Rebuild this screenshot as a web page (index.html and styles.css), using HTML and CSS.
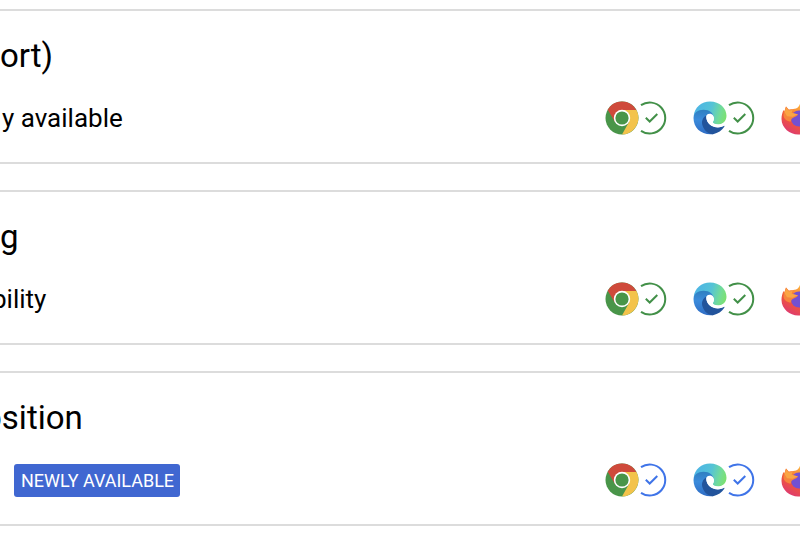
FILE: index.html
```
<!DOCTYPE html>
<html lang="en">
<head>
  <meta charset="UTF-8">
  <meta name="viewport" content="width=device-width, initial-scale=1.0">
  <title>Baseline status</title>
  <link rel="stylesheet" href="styles.css">
</head>
<body>

  <!-- Shared icons -->
  <svg class="sprite" aria-hidden="true">
    <defs>
      <linearGradient id="edge-light" x1="0" y1="0.4" x2="1" y2="0.6">
        <stop offset="0" stop-color="#4db4e6"/>
        <stop offset="0.5" stop-color="#55c3d6"/>
        <stop offset="0.8" stop-color="#72dc98"/>
        <stop offset="1" stop-color="#7ce070"/>
      </linearGradient>
      <linearGradient id="edge-mid" x1="0.5" y1="0" x2="0.5" y2="1">
        <stop offset="0" stop-color="#2f7fc0"/>
        <stop offset="0.4" stop-color="#3b8bdb"/>
        <stop offset="1" stop-color="#2f6cc4"/>
      </linearGradient>
      <linearGradient id="fox-body" x1="0.9" y1="0" x2="0.3" y2="1">
        <stop offset="0" stop-color="#ffd84a"/>
        <stop offset="0.4" stop-color="#fa9238"/>
        <stop offset="0.7" stop-color="#ee5340"/>
        <stop offset="1" stop-color="#dd3a72"/>
      </linearGradient>
    </defs>
    <symbol id="chrome" viewBox="0 0 34 34">
      <circle cx="17" cy="17" r="16.5" fill="#499549"/>
      <path d="M17 9H31.4A16.5 16.5 0 0 1 17 33.5L24 21Z" fill="#f3c34b"/>
      <path d="M2.7 8.8A16.5 16.5 0 0 1 31.4 9H17L10 21Z" fill="#cf4a3b"/>
      <circle cx="17" cy="17" r="8.2" fill="#fff"/>
      <circle cx="17" cy="17" r="6.6" fill="#499549"/>
    </symbol>
    <symbol id="edge" viewBox="0 0 34 34">
      <path d="M.7 15C1.600 6 8.500 .5 17 .5c9.700 0 16.500 6.700 16.500 14.300 0 5-3.600 8.700-8.300 8.700-4 0-6-1.700-5.200-2.900 1.600-2.400 1-5.600-2-7.600C12 8.500 3.500 10 .7 15Z" fill="url(#edge-light)"/>
      <path d="M.5 17C.8 11.500 5 8.800 10.500 8.800c6 0 10 3.500 10.300 7.500C19 13 16 12.600 14 14c-3.500 3-2 13 6 19.200C8.500 34.500.5 27 .5 17Z" fill="url(#edge-mid)"/>
      <path d="M13.500 14c-4 3-5.500 6.500-3.800 11C11.500 29.800 15 33 20 33.200c5-1 9-3.800 11.300-7.400.5-.8-.2-1.300-1-.9-3 1.500-6.700 1.900-9.800.6-5-2-8-6.500-7-11.500Z" fill="#22549c"/>
      <path d="M13.600 14.200c2-2 5-1.800 6.700.6 1 1.500.9 3.700-.2 5.600-.8 1.200 1 3.200 5.100 3.200 2.500 0 4.600-.8 6-2.100l-.3 3.600c-3.500 1.700-7.500 1.900-10.700.5-4.800-2.100-7.600-6.600-6.600-11.400Z" fill="#fff"/>
    </symbol>
    <symbol id="firefox" viewBox="0 0 34 34">
      <path d="M15 7.500C18 6 19 3.500 19.500 .5c4 2 6 4.500 7.500 7.500l2-1c3 4 4 8 3.500 12C32 28 25 33.500 17 33.500S.5 27 .5 18c0-3.500.8-6.500 2-9l.8 1.500L5 5.500l3 3.300Z" fill="url(#fox-body)"/>
      <circle cx="18" cy="17.500" r="8" fill="#7350d2"/>
      <path d="M2.500 14 5 5.500 7.600 9c1.500-.5 2.500-.5 4-.2L10.800 11.500c1.800 1.200 3.600 1.500 6.200 1.600-.2 2-2.600 2.600-5.300 3.900-1.500.8-1.900 2-1.700 3.500C6 20.500 2.500 18 2.500 14Z" fill="#f6853c"/>
      <path d="M3.500 11 5.200 6.500 7.600 9.500 11.600 9l-1 2.700 6 1.500-5 2.600-5.600-.6Z" fill="#faa544"/>
    </symbol>
    <symbol id="check" viewBox="0 0 28 34">
      <path d="M2 4.200A15.500 15.500 0 1 1 2 29.800" fill="none" stroke="currentColor" stroke-width="2"/>
      <path d="M6.800 16.800 10.700 20.500 18.300 13" fill="none" stroke="currentColor" stroke-width="2"/>
    </symbol>
  </svg>

  <main class="features">
    <section class="card">
      <h2 class="title">ort)</h2>
      <div class="status">
        <span class="label">y available</span>
        <div class="browsers">
          <span class="browser"><svg class="logo"><use href="#chrome"/></svg><svg class="check"><use href="#check"/></svg></span>
          <span class="browser"><svg class="logo"><use href="#edge"/></svg><svg class="check"><use href="#check"/></svg></span>
          <span class="browser"><svg class="logo"><use href="#firefox"/></svg><svg class="check"><use href="#check"/></svg></span>
        </div>
      </div>
    </section>

    <section class="card">
      <h2 class="title">g</h2>
      <div class="status">
        <span class="label label-cut">bility</span>
        <div class="browsers">
          <span class="browser"><svg class="logo"><use href="#chrome"/></svg><svg class="check"><use href="#check"/></svg></span>
          <span class="browser"><svg class="logo"><use href="#edge"/></svg><svg class="check"><use href="#check"/></svg></span>
          <span class="browser"><svg class="logo"><use href="#firefox"/></svg><svg class="check"><use href="#check"/></svg></span>
        </div>
      </div>
    </section>

    <section class="card newly">
      <h2 class="title title-cut">osition</h2>
      <div class="status">
        <span class="badge">NEWLY AVAILABLE</span>
        <div class="browsers">
          <span class="browser"><svg class="logo"><use href="#chrome"/></svg><svg class="check"><use href="#check"/></svg></span>
          <span class="browser"><svg class="logo"><use href="#edge"/></svg><svg class="check"><use href="#check"/></svg></span>
          <span class="browser"><svg class="logo"><use href="#firefox"/></svg><svg class="check"><use href="#check"/></svg></span>
        </div>
      </div>
    </section>
  </main>

</body>
</html>
```

FILE: styles.css
```
body {
  background-color: #fff;
  font-family: Roboto, Arial, sans-serif;
  margin: 0;
  color: #000;
  overflow: hidden;
}

.sprite {
  position: absolute;
  width: 0;
  height: 0;
}

.features {
  display: flex;
  flex-direction: column;
  gap: 26px;
  padding-top: 9px;
}

.card {
  border-top: 2px solid #dcdcdc;
  border-bottom: 2px solid #dcdcdc;
  padding: 25px 0 26px;
  color: #429048;
}

.newly {
  color: #3f74e8;
}

.title {
  margin: 0 0 24px;
  font-size: 33px;
  line-height: 40px;
  font-weight: 400;
  color: #000;
}

.title-cut {
  margin-left: -17px;
}

.status {
  display: flex;
  align-items: center;
  justify-content: space-between;
  height: 36px;
}

.label {
  margin-left: 2px;
  font-size: 26px;
  line-height: 36px;
  color: #000;
}

.label-cut {
  margin-left: -8px;
}

.badge {
  margin-left: 14px;
  padding: 0 6px 0 7px;
  background-color: #4067d1;
  border-radius: 3px;
  font-size: 18px;
  line-height: 33px;
  color: #fff;
}

/* the row of browsers runs past the right edge */
.browsers {
  display: flex;
  gap: 26px;
  margin-right: -43px;
}

.browser {
  display: flex;
}

.logo {
  width: 34px;
  height: 34px;
}

.check {
  width: 28px;
  height: 34px;
}
```
